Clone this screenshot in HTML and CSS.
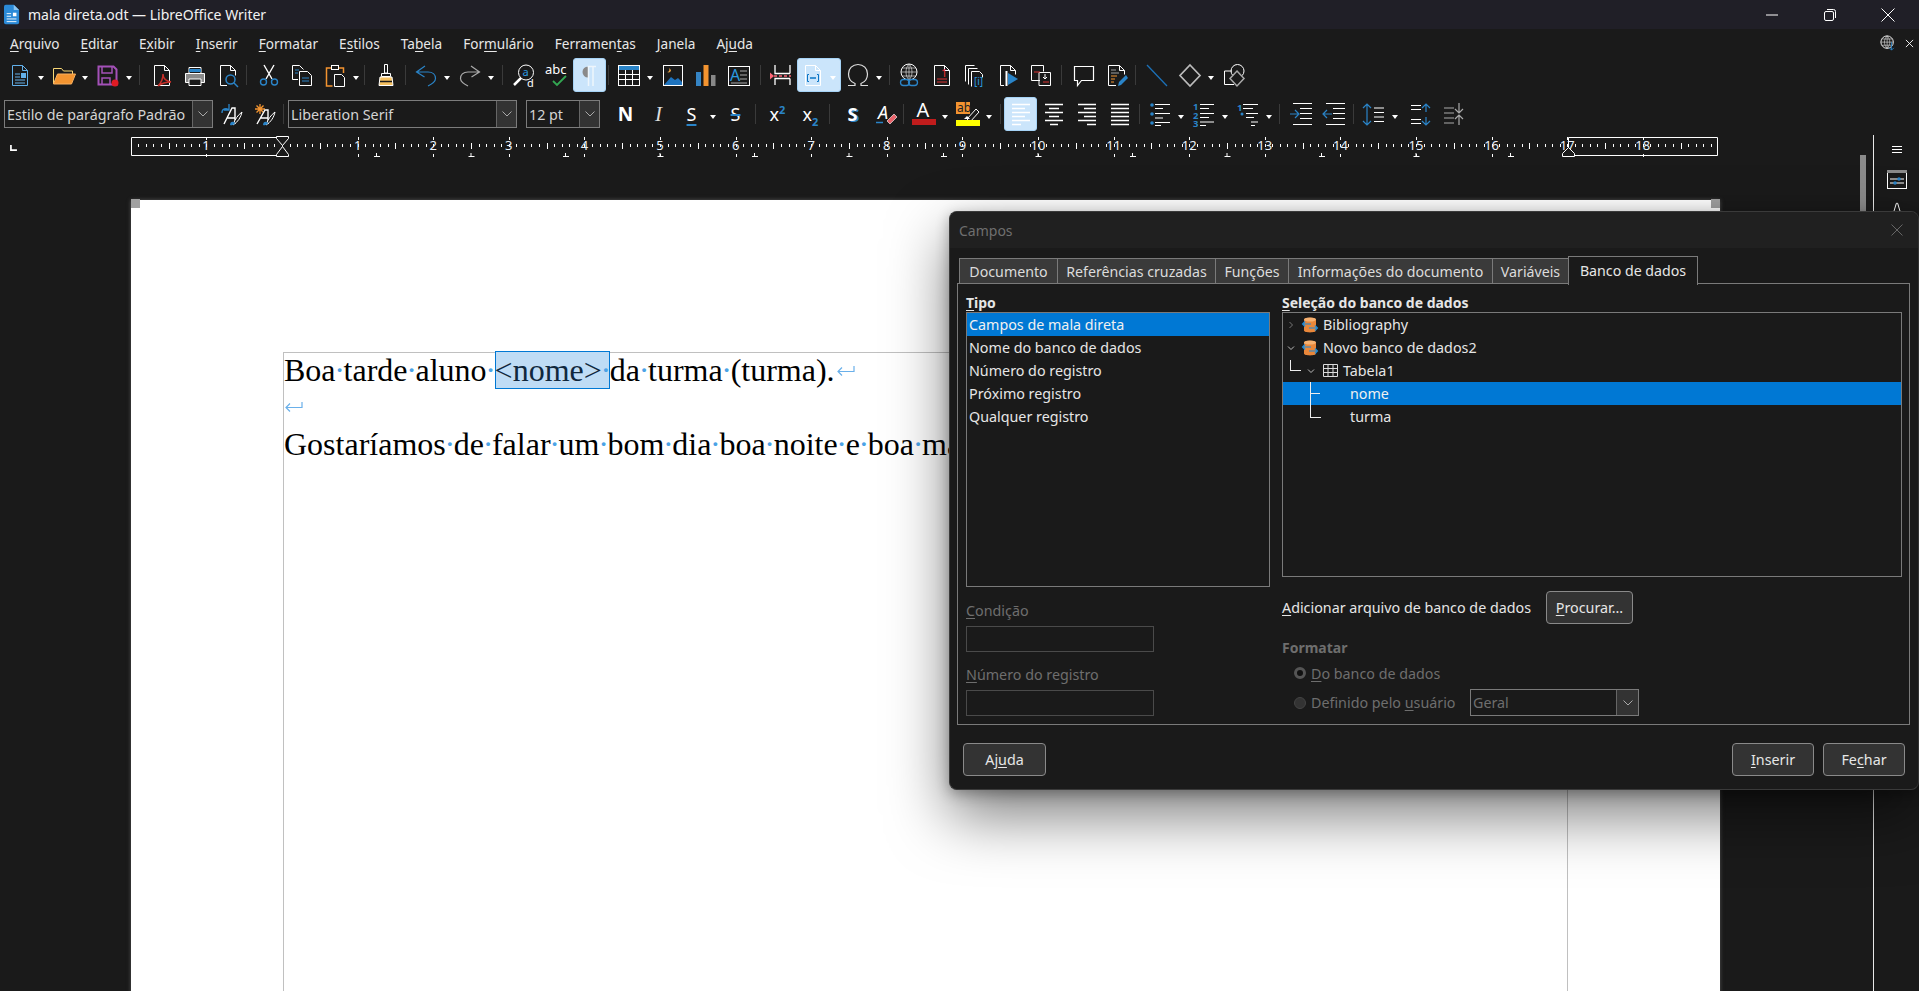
FILE: index.html
```html
<!DOCTYPE html>
<html lang="pt-BR">
<head>
<meta charset="utf-8">
<title>mala direta.odt — LibreOffice Writer</title>
<link rel="stylesheet" href="styles.css">
</head>
<body>
<div class="app">
  <header class="titlebar">
    <svg class="appicon" viewBox="0 0 18 22"><path d="M2 0h9l6 6v14a2 2 0 0 1-2 2H2a2 2 0 0 1-2-2V2a2 2 0 0 1 2-2z" fill="#2b8ad8"/><path d="M11 0l6 6h-6z" fill="#8cc4f0"/><path d="M3 10h5M3 13h5M3 16h11M3 19h11" stroke="#fff" fill="none"/><rect x="10" y="9" width="4" height="4" fill="#fff"/></svg>
    <span class="wintitle">mala direta.odt — LibreOffice Writer</span>
    <div class="winctl">
      <svg viewBox="0 0 14 14"><path d="M1 7h12" class="w"/></svg>
      <svg viewBox="0 0 14 14"><path d="M4 1.500h6.500a2 2 0 0 1 2 2V10M3 3.500h6a1.500 1.500 0 0 1 1.500 1.500v6A1.500 1.500 0 0 1 9 12.500H3A1.500 1.500 0 0 1 1.500 11V5A1.500 1.500 0 0 1 3 3.500z" class="w"/></svg>
      <svg viewBox="0 0 14 14"><path d="M.5.500l13 13M13.500.500l-13 13" class="w"/></svg>
    </div>
  </header>

  <nav class="menubar">
    <span><u>A</u>rquivo</span><span><u>E</u>ditar</span><span>E<u>x</u>ibir</span><span><u>I</u>nserir</span><span><u>F</u>ormatar</span><span>E<u>s</u>tilos</span><span>Ta<u>b</u>ela</span><span>For<u>m</u>ulário</span><span>Ferramen<u>t</u>as</span><span><u>J</u>anela</span><span>Aj<u>u</u>da</span>
    <div class="menu-end">
      <svg viewBox="0 0 18 18"><circle cx="8" cy="8" r="7" class="w"/><path d="M1 8h14M2 4.500h12M2 11.500h12M8 1v14M8 1c-4 4-4 10 0 14M8 1c4 4 4 10 0 14" class="w thin"/><path d="M13 8v9M10.500 14.500L13 17l2.500-2.500" class="b"/></svg>
      <svg class="mclose" viewBox="0 0 10 10"><path d="M1 1l8 8M9 1l-8 8" class="w"/></svg>
    </div>
  </nav>

  <div class="toolbar tb1">
    <div class="t"><svg viewBox="0 0 24 24"><path d="M4.500 2.500h10l5 5v15h-15z" class="lb"/><path d="M14.500 2.500v5h5M7 11h5M7 14h5M7 17h10M7 20h10" class="lb"/><rect x="13" y="10" width="5" height="5" fill="#62b0ea"/></svg></div><i class="arr"></i>
    <div class="t"><svg viewBox="0 0 24 24"><path d="M1.500 21V5.500h8l2 2.500h9v3" fill="none" stroke="#f8d775"/><path d="M1.500 21l4-10h18l-4 10z" fill="#f39430" stroke="#f8b060"/></svg></div><i class="arr"></i>
    <div class="t"><svg viewBox="0 0 24 24"><path d="M2.500 3.500h15l3 3v15h-18z" fill="none" stroke="#a451b8" stroke-width="2"/><path d="M6 4v6h10V4M6 22v-7h8v7" fill="none" stroke="#a451b8" stroke-width="1.500"/><circle cx="19" cy="20" r="3.500" fill="#e01b24"/></svg></div><i class="arr"></i>
    <i class="sep l4 r5"></i>
    <div class="t"><svg viewBox="0 0 24 24"><path d="M4.500 2.500h10l5 5v15h-15z" class="w"/><path d="M14.500 2.500v5h5" class="w"/><path d="M8 23c3-3 5-7 5-12 0 4 3 7 8 8-5 0-9 1-13 4z" fill="#1a1a1a" stroke="#c8302a" stroke-width="1.500"/></svg></div>
    <div class="t"><svg viewBox="0 0 24 24"><path d="M6 10V4.500h12V10" class="w"/><rect x="6" y="6" width="12" height="3" fill="#2a84c8"/><path d="M2.500 10.500h19v9h-19z" fill="#8a8a8a" stroke="#fff"/><path d="M6 16h12v6.500H6z" fill="#1a1a1a" stroke="#fff"/></svg></div>
    <div class="t"><svg viewBox="0 0 24 24"><path d="M11 22.500H4.500v-20h10l5 5v5M14.500 2.500v5h5" class="w"/><circle cx="14.500" cy="16.500" r="4.500" class="b" stroke-width="1.500"/><path d="M18 20l4 4" class="b" stroke-width="1.500"/></svg></div>
    <i class="sep l2 r5"></i>
    <div class="t"><svg viewBox="0 0 24 24"><path d="M7 2l8 14M17 2L9 16" class="w" stroke-width="1.400"/><circle cx="6.500" cy="19" r="3" class="b" stroke-width="1.400"/><circle cx="17.500" cy="19" r="3" class="b" stroke-width="1.400"/></svg></div>
    <div class="t"><svg viewBox="0 0 24 24"><path d="M8 16.500H2.500v-14h7l4 4" class="w"/><path d="M5 7h4M5 10h3" class="b"/><path d="M9.500 8.500h8l4 4v10h-12z" class="w"/><path d="M12 15h7M12 18h7" class="b"/></svg></div>
    <div class="t"><svg viewBox="0 0 24 24"><path d="M8 5H3.500v18h6M16 5h4.500v5" fill="none" stroke="#f39430" stroke-width="1.500"/><rect x="8.500" y="2.500" width="7" height="4" class="w"/><path d="M11.500 11.500h7l3 3v9h-10z" class="w"/></svg></div><i class="arr"></i>
    <i class="sep l2 r4"></i>
    <div class="t"><svg viewBox="0 0 24 24"><path d="M10.500 1.500h3V10h-3zM7.500 10.500h9v3h-9z" class="w"/><path d="M6 14h12l1 8.500H5z" fill="#f5c060" stroke="#fff"/><path d="M6 18.500h12" stroke="#1a1a1a" stroke-width="1.500"/></svg></div>
    <i class="sep l3 r3"></i>
    <div class="t"><svg viewBox="0 0 24 24"><path d="M11 3L2.500 9l8 5M2.500 9H14c5 0 7.500 3 7.500 6.500S18 21 14 23" class="b" stroke-width="1.200"/></svg></div><i class="arr"></i>
    <div class="t"><svg viewBox="0 0 24 24"><path d="M13 3l8.500 6-8 5M21.500 9H10C5 9 2.500 12 2.500 15.500S6 21 10 23" class="g" stroke-width="1.200"/></svg></div><i class="arr"></i>
    <i class="sep l5 r4"></i>
    <div class="t"><svg viewBox="0 0 24 24"><circle cx="14" cy="9.500" r="7.500" class="w"/><path d="M9 15l-7 7" class="w" stroke-width="2.500"/><text x="10.500" y="13" class="tic bt">a</text><text x="15" y="23.500" class="tic">d</text></svg></div>
    <div class="t"><svg viewBox="0 0 24 24"><text x="0" y="11" class="tabc">abc</text><path d="M8 18l4 4 9-9" fill="none" stroke="#33a852" stroke-width="1.800"/></svg></div>
    <div class="t on"><svg viewBox="0 0 24 24"><path d="M10 3.500a5.500 5.500 0 0 0 0 11z" fill="#8a8a8a"/><path d="M9.500 3.500H18M10.500 3.500V23M15 3.500V23" fill="none" stroke="#eef6fc" stroke-width="1.500"/></svg></div>
    <i class="sep l2 r3"></i>
    <div class="t"><svg viewBox="0 0 24 24"><rect x="1.500" y="2.500" width="21" height="20" class="w"/><rect x="2" y="3" width="20" height="4" fill="#2a84c8"/><path d="M2 11.500h20M2 16.500h20M8.500 7v15M15.500 7v15" class="w"/></svg></div><i class="arr"></i>
    <div class="t"><svg viewBox="0 0 24 24"><rect x="2.500" y="2.500" width="19" height="20" class="w"/><path d="M3 22l7-8 4 3 3-2 4 4v3z" fill="#1e73be"/><path d="M8 5c1 2 0 4-2 4 2 1 4 0 4-2z" fill="#e9a040"/></svg></div>
    <div class="t"><svg viewBox="0 0 24 24"><rect x="2" y="9" width="5" height="14" fill="#3584c4"/><rect x="9.500" y="2" width="5" height="21" fill="#f39430"/><rect x="17" y="12" width="4.500" height="11" fill="#888"/></svg></div>
    <div class="t"><svg viewBox="0 0 24 24"><rect x="1.500" y="3.500" width="21" height="19" class="w"/><text x="3" y="18" class="tA bt">A</text><path d="M13 8h7M13 12h7M13 16h7M4 20h16" class="g"/></svg></div>
    <i class="sep l5 r3"></i>
    <div class="t"><svg viewBox="0 0 24 24"><path d="M6 2v8.500h15M21 2v8.500M6 22v-6.500h15M21 22v-6.500" class="w" stroke-width="1.300"/><path d="M5 13h17" stroke="#f67" stroke-width="1.500" stroke-dasharray="3 2" fill="none"/><path d="M1 9.500l4 3.500-4 3.500z" fill="#f67"/></svg></div>
    <div class="t wide on"><svg viewBox="0 0 24 24"><path d="M4.500 2.500h10l5 5v15h-15z" class="w"/><path d="M14.500 2.500v5h5" class="w"/><path d="M8 11.500H6.500v7H8M16 11.500h1.500v7H16" fill="none" stroke="#0a74c4"/><path d="M9 15h6" stroke="#0a74c4" stroke-width="1.500"/></svg><i class="arr"></i></div>
    <div class="t"><svg viewBox="0 0 24 24"><path d="M2 22.500h7v-2c-4-1.500-6.500-5-6.500-9.500C2.500 5.500 6.500 1.500 12 1.500s9.500 4 9.500 9.500c0 4.500-2.500 8-6.500 9.500v2h7" fill="none" stroke="#ddd" stroke-width="1.200"/></svg></div><i class="arr"></i>
    <i class="sep l4 r2"></i>
    <div class="t"><svg viewBox="0 0 24 24"><circle cx="12" cy="9" r="8" class="w"/><path d="M4 9h16M5 5h14M5 13h14M12 1v16M12 1c-4 4-4 12 0 16M12 1c4 4 4 12 0 16" class="w thin"/><rect x="3.500" y="16.500" width="9" height="6" rx="3" class="b" stroke-width="1.300"/><rect x="11.500" y="16.500" width="9" height="6" rx="3" class="b" stroke-width="1.300"/></svg></div>
    <div class="t"><svg viewBox="0 0 24 24"><path d="M4.500 2.500h10l5 5v15h-15z" class="w"/><path d="M14.500 2.500v5h5" class="w"/><text x="11" y="14" class="tic rt">1</text><path d="M7 16h10M7 19h10" stroke="#d33" fill="none"/></svg></div>
    <div class="t"><svg viewBox="0 0 24 24"><path d="M2.500 18.500v-16h9M5.500 21.500v-16h9M8.500 2.500" class="w"/><path d="M8.500 23.500v-15h8l3 3v3" class="w"/><text x="11" y="22" class="tic sm bt">[i]</text></svg></div>
    <div class="t"><svg viewBox="0 0 24 24"><path d="M8 22.500H4.500v-20h10l5 5v4M14.500 2.500v5h5" class="w"/><path d="M10.500 8v15" class="w" stroke-width="2"/><path d="M12 10l10 6-10 6z" fill="#2a84c8"/></svg></div>
    <div class="t"><svg viewBox="0 0 24 24"><path d="M11 17.500H2.500v-15h12v6" class="w"/><path d="M10 9.500h11.500v13H10z" class="w"/><path d="M5 9h6" stroke="#d33"/><path d="M14 19h6" stroke="#d33"/><path d="M16 11v5M14 14l2 2 2-2" class="w"/></svg></div>
    <i class="sep l4 r5"></i>
    <div class="t"><svg viewBox="0 0 24 24"><path d="M2.500 3.500h19v14H9.500l-4 5v-5h-3z" class="w" stroke-width="1.200"/></svg></div>
    <div class="t"><svg viewBox="0 0 24 24"><path d="M11 22.500H3.500v-20h11l5 5v4M14.500 2.500v5h5" class="w"/><path d="M6 7h5M6 10h8" class="w thin"/><path d="M6 13h6M6 16h4M6 19h3" fill="none" stroke="#f39430"/><path d="M13 23l1-4 7-7 2 3-7 7z" fill="#2a84c8"/></svg></div>
    <i class="sep l2 r4"></i>
    <div class="t"><svg viewBox="0 0 24 24"><path d="M2 2l20 21" stroke="#1c71b8" stroke-width="1.300" fill="none"/></svg></div>
    <div class="t"><svg viewBox="0 0 24 24"><path d="M12 2l10 10.500L12 23 2 12.500z" fill="none" stroke="#bbb" stroke-width="1.700"/></svg></div><i class="arr"></i>
    <div class="t"><svg viewBox="0 0 24 24"><path d="M10 8H2.500v13.500H12" class="w"/><circle cx="15.500" cy="8" r="6.500" class="w"/><path d="M15 8l7 7.500-7 7.500-7-7.500z" fill="#1a1a1a" stroke="#aaa" stroke-width="1.500"/></svg></div>
  </div>

  <div class="toolbar tb2">
    <div class="combo c-style"><span>Estilo de parágrafo Padrão</span><b><svg viewBox="0 0 10 6"><path d="M.5.500L5 5 9.500.500"/></svg></b></div>
    <div class="t ml2"><svg viewBox="0 0 24 24"><path d="M2 11a4 4 0 0 1 7-3M9 2v6H4" class="b" stroke-width="1.300"/><path d="M4 22l8-16h3v16M7.500 16h8" class="w" stroke-width="1.400"/><path d="M13 23c2-6 5-10 9-13-1 5-4 10-9 13z" fill="#1a1a1a" stroke="#fff"/><path d="M10 23c0-3 2-4 4-3s0 4-4 3z" fill="#2a84c8"/></svg></div>
    <div class="t"><svg viewBox="0 0 24 24"><path d="M2 7h10M7 2v10M3.500 3.500l7 7M10.500 3.500l-7 7" fill="none" stroke="#f39430" stroke-width="1.300"/><path d="M4 22l8-14h3v14M7.500 16h8" class="w" stroke-width="1.400"/><path d="M13 23c2-6 5-10 9-13-1 5-4 10-9 13z" fill="#1a1a1a" stroke="#fff"/><path d="M10 23c0-3 2-4 4-3s0 4-4 3z" fill="#2a84c8"/></svg></div>
    <i class="sep l2 r4"></i>
    <div class="combo c-font"><span>Liberation Serif</span><b><svg viewBox="0 0 10 6"><path d="M.5.500L5 5 9.500.500"/></svg></b></div>
    <div class="combo c-size"><span>12 pt</span><b><svg viewBox="0 0 10 6"><path d="M.5.500L5 5 9.500.500"/></svg></b></div>
    <div class="t ml9"><span class="fmt fb">N</span></div>
    <div class="t"><span class="fmt fi">I</span></div>
    <div class="t"><span class="fmt fu">S</span></div><i class="arr"></i>
    <div class="t"><span class="fmt fs">S</span></div>
    <i class="sep l3 r5"></i>
    <div class="t"><span class="fmt">x<sup>2</sup></span></div>
    <div class="t"><span class="fmt">x<sub>2</sub></span></div>
    <i class="sep l2 r6"></i>
    <div class="t"><span class="fmt fsh">S</span></div>
    <div class="t"><svg viewBox="0 0 24 24"><text x="4" y="17" class="tA2">A</text><path d="M2 20.500h7" class="b" stroke-width="1.500"/><path d="M13 19l7-7 3 3-7 7z" fill="#e8636a" stroke="#fff" stroke-width=".6"/></svg></div>
    <i class="sep l1 r3"></i>
    <div class="t"><svg viewBox="0 0 24 24"><text x="4.500" y="15" class="tA3">A</text><rect x="0" y="17" width="24" height="6" fill="#c01c1c"/></svg></div><i class="arr"></i>
    <div class="t"><svg viewBox="0 0 24 24"><rect x="0" y="0" width="14" height="12" fill="#f39430"/><text x="1" y="10" class="tic tk">ab</text><path d="M11 17l9-10 3 3-9 10z" fill="#1a1a1a" stroke="#fff"/><path d="M8 17l3-3 3 3z" fill="#fff"/><rect x="0" y="18" width="24" height="6" fill="#ff0"/></svg></div><i class="arr"></i>
    <i class="sep l5 r3"></i>
    <div class="t on"><svg viewBox="0 0 24 24"><path d="M3 2.500h18M3 6.500h13M3 10.500h18M3 14.500h13M3 18.500h18M3 22.500h9" class="w" stroke-width="1.300"/></svg></div>
    <div class="t"><svg viewBox="0 0 24 24"><path d="M3 2.500h18M7 6.500h10M3 10.500h18M7 14.500h10M3 18.500h18M8 22.500h8" class="w" stroke-width="1.300"/></svg></div>
    <div class="t"><svg viewBox="0 0 24 24"><path d="M3 2.500h18M9 6.500h12M3 10.500h18M9 14.500h12M3 18.500h18M12 22.500h9" class="w" stroke-width="1.300"/></svg></div>
    <div class="t"><svg viewBox="0 0 24 24"><path d="M3 2.500h18M3 6.500h18M3 10.500h18M3 14.500h18M3 18.500h18M3 22.500h18" class="w" stroke-width="1.300"/></svg></div>
    <i class="sep l3 r3"></i>
    <div class="t"><svg viewBox="0 0 24 24"><circle cx="4" cy="3" r="1.800" fill="#2a84c8"/><circle cx="4" cy="12" r="1.800" fill="#2a84c8"/><circle cx="4" cy="21" r="1.800" fill="#2a84c8"/><path d="M7 2.500h15M7 6.500h8M7 11.500h15M7 16h8M7 20.500h15M7 23.500h6" class="w" stroke-width="1.200"/></svg></div><i class="arr"></i>
    <div class="t"><svg viewBox="0 0 24 24"><text x="1" y="8" class="tn">1</text><text x="1" y="17" class="tn">2</text><text x="1" y="25" class="tn">3</text><path d="M8 2.500h14M8 6.500h9M8 11.500h14M8 15.500h9M8 20h14M8 23.500h6" class="w" stroke-width="1.200"/></svg></div><i class="arr"></i>
    <div class="t"><svg viewBox="0 0 24 24"><text x="1" y="9" class="tn">1</text><circle cx="6" cy="12" r="1.500" fill="#2a84c8"/><path d="M7 2.500h15M7 6.500h10M10 11.500h12M10 15.500h8M15 20h7M15 23.500h4" class="w" stroke-width="1.200"/></svg></div><i class="arr"></i>
    <i class="sep l4 r4"></i>
    <div class="t"><svg viewBox="0 0 24 24"><path d="M4 1.500h19M11 6.500h12M11 11.500h12M11 16.500h12M4 22.500h19" class="w" stroke-width="1.200"/><path d="M1 12h8M6 8l4 4-4 4" class="b" stroke-width="1.200"/></svg></div>
    <div class="t"><svg viewBox="0 0 24 24"><path d="M4 1.500h19M11 6.500h12M11 11.500h12M11 16.500h12M4 22.500h19" class="w" stroke-width="1.200"/><path d="M10 12H2M5 8l-4 4 4 4" class="b" stroke-width="1.200"/></svg></div>
    <i class="sep l3 r3"></i>
    <div class="t"><svg viewBox="0 0 24 24"><path d="M5 2v21M1 6l4-4 4 4M1 19l4 4 4-4" class="b" stroke-width="1.200"/><path d="M12 6h10M12 10.500h10M12 15h10M12 19.500h10" class="w" stroke-width="1.200"/></svg></div><i class="arr"></i>
    <div class="t ml3"><svg viewBox="0 0 24 24"><path d="M2 3.500h10M2 7.500h10M2 17.500h10M2 21.500h10" class="w" stroke-width="1.200"/><path d="M17 10V2M13 6l4-4 4 4M17 15v8M13 19l4 4 4-4" class="b" stroke-width="1.200"/></svg></div>
    <div class="t"><svg viewBox="0 0 24 24"><path d="M2 6h10M2 11h10M2 16h10M2 21h10" class="g" stroke-width="1.200"/><path d="M17 1v10M13 7l4 4 4-4M17 23V13M13 17l4-4 4 4" class="g" stroke-width="1.200"/></svg></div>
  </div>

  <main class="workspace">
    <div class="docside">
      <div class="rulerrow">
        <svg class="tabtype" viewBox="0 0 8 7"><path d="M0 0h2v5h6v2H0z" fill="#fff"/></svg>
        <svg class="ruler" viewBox="0 0 1600 23">
          <path d="M.5 2.500H151M.5 20.500H151M.5 2.500v18M1437.500 2.500H1586.500v18H1437.500z" class="w"/>
          <line x1="7.360" y1="10.500" x2="1586" y2="10.500" stroke-dasharray="1 6.560" class="tick"/>
          <line x1="37.600" y1="10.500" x2="1586" y2="10.500" stroke-dasharray="1 74.600" class="tick long"/>
          <line x1="75.400" y1="3" x2="1586" y2="3" stroke-dasharray="1 74.600" class="tick"/>
          <line x1="75.400" y1="20" x2="1586" y2="20" stroke-dasharray="1 74.600" class="tick"/>
          <path d="M245.500 18v3M243 21.500h6M340 18v3M337.500 21.500h6M434.500 18v3M432 21.500h6M529 18v3M526.500 21.500h6M623.500 18v3M621 21.500h6M718 18v3M715.500 21.500h6M812.500 18v3M810 21.500h6M907 18v3M904.500 21.500h6M1001.500 18v3M999 21.500h6M1096 18v3M1093.500 21.500h6M1190.500 18v3M1188 21.500h6M1285 18v3M1282.500 21.500h6M1379.500 18v3M1377 21.500h6" class="w"/>
          <g class="rnum">
            <text x="75">1</text><text x="226.600">1</text><text x="302.200">2</text><text x="377.800">3</text><text x="453.400">4</text><text x="529">5</text><text x="604.600">6</text><text x="680.200">7</text><text x="755.800">8</text><text x="831.400">9</text><text x="907">10</text><text x="982.600">11</text><text x="1058.200">12</text><text x="1133.800">13</text><text x="1209.400">14</text><text x="1285">15</text><text x="1360.600">16</text><text x="1436.200">17</text><text x="1511.800">18</text>
          </g>
          <path d="M145.500 1.500h12v2l-6 7-6-7zM145.500 21.500h12v-2l-6-8-6 8z" fill="#1a1a1a" stroke="#fff"/>
          <path d="M1431.500 21.500h12v-3l-6-6-6 6z" fill="#1a1a1a" stroke="#fff"/>
        </svg>
      </div>
      <div class="docview">
        <div class="page">
          <i class="crop crop-l"></i><i class="crop crop-r"></i>
          <div class="textarea">
            <p>Boa<b>·</b>tarde<b>·</b>aluno<b>·</b><span class="field">&lt;nome&gt;<b>·</b></span>da<b>·</b>turma<b>·</b>(turma).<svg class="pil" viewBox="0 0 18 11"><path d="M17 0v5.500H1M5 1.500L1 5.500l4 4"/></svg></p>
            <p><svg class="pil first" viewBox="0 0 18 11"><path d="M17 0v5.500H1M5 1.500L1 5.500l4 4"/></svg></p>
            <p>Gostaríamos<b>·</b>de<b>·</b>falar<b>·</b>um<b>·</b>bom<b>·</b>dia<b>·</b>boa<b>·</b>noite<b>·</b>e<b>·</b>boa<b>·</b>manhã.</p>
          </div>
        </div>
      </div>
    </div>
    <div class="vscroll"><i class="thumb"></i></div>
    <aside class="sidebar">
      <svg class="sb-menu" viewBox="0 0 10 7"><path d="M0 .5h10M0 3.500h10M0 6.500h10" class="w"/></svg>
      <svg class="sb-prop" viewBox="0 0 20 19"><rect x=".5" y=".5" width="19" height="18" class="w"/><rect x="0" y="0" width="20" height="3" fill="#8a8a8a"/><path d="M3 9h14M3 13h14" class="w"/><circle cx="12" cy="9" r="1.800" fill="#2a84c8"/><circle cx="8" cy="13" r="1.800" fill="#2a84c8"/></svg>
      <svg class="sb-a" viewBox="0 0 20 24"><path d="M3 22L9 2h2l6 20" class="w" stroke-width="1.500"/></svg>
    </aside>
  </main>

  <section class="dlg">
    <div class="dlg-title"><span>Campos</span><svg viewBox="0 0 12 12"><path d="M.5.500l11 11M11.500.500l-11 11"/></svg></div>
    <div class="dlg-body">
      <div class="tabs">
        <span class="tab w-doc">Documento</span><span class="tab w-ref">Referências cruzadas</span><span class="tab w-fun">Funções</span><span class="tab w-inf">Informações do documento</span><span class="tab w-var">Variáveis</span><span class="tab active w-ban">Banco de dados</span>
      </div>
      <div class="panel">
        <div class="col-l">
          <div class="lbl strong"><u>T</u>ipo</div>
          <ul class="list">
            <li class="sel">Campos de mala direta</li>
            <li>Nome do banco de dados</li>
            <li>Número do registro</li>
            <li>Próximo registro</li>
            <li>Qualquer registro</li>
          </ul>
          <div class="lbl dim m15"><u>C</u>ondição</div>
          <div class="input"></div>
          <div class="lbl dim m14"><u>N</u>úmero do registro</div>
          <div class="input"></div>
        </div>
        <div class="col-r">
          <div class="lbl strong"><u>S</u>eleção do banco de dados</div>
          <div class="tree">
            <div class="row"><svg class="chev" viewBox="0 0 10 10"><path d="M3.500 2l3 3-3 3" stroke="#777"/></svg><svg class="db" viewBox="0 0 16 18"><path d="M2 3.500C2 1 14 1 14 3.500v11C14 17 2 17 2 14.500z" fill="#e9873a"/><ellipse cx="8" cy="3.500" rx="6" ry="2" fill="#f5b070"/><path d="M0 8h9M3 5.500L.5 8 3 10.500M16 12H7M13 9.500l2.500 2.500-2.500 2.500" fill="none" stroke="#1c8ad8" stroke-width="1.200"/></svg><span class="rt1">Bibliography</span></div>
            <div class="row"><svg class="chev" viewBox="0 0 10 10"><path d="M2 3.500l3 3 3-3" stroke="#bbb"/></svg><svg class="db" viewBox="0 0 16 18"><path d="M2 3.500C2 1 14 1 14 3.500v11C14 17 2 17 2 14.500z" fill="#e9873a"/><ellipse cx="8" cy="3.500" rx="6" ry="2" fill="#f5b070"/><path d="M0 8h9M3 5.500L.5 8 3 10.500M16 12H7M13 9.500l2.500 2.500-2.500 2.500" fill="none" stroke="#1c8ad8" stroke-width="1.200"/></svg><span class="rt1">Novo banco de dados2</span></div>
            <div class="row lvl1 l-last"><svg class="chev" viewBox="0 0 10 10"><path d="M2 3.500l3 3 3-3" stroke="#bbb"/></svg><svg class="tbl" viewBox="0 0 15 13"><path d="M.5.500h14v12H.5zM.5 4.500h14M.5 8.500h14M5 .5v12M10 .5v12" fill="none" stroke="#ddd"/></svg><span class="rt1">Tabela1</span></div>
            <div class="row lvl2 sel l-mid">nome</div>
            <div class="row lvl2 l-end">turma</div>
          </div>
          <div class="addrow"><span class="addlbl"><u>A</u>dicionar arquivo de banco de dados</span><span class="btn b-proc"><span><u>P</u>rocurar...</span></span></div>
          <div class="lbl strong dim m15">Formatar</div>
          <div class="radio r-1"><i class="rd on"></i><span><u>D</u>o banco de dados</span></div>
          <div class="radio r-2"><i class="rd"></i><span class="rdw">Definido pelo <u>u</u>suário</span><div class="combo c-geral"><span>Geral</span><b><svg viewBox="0 0 10 6"><path d="M.5.500L5 5 9.500.500"/></svg></b></div></div>
        </div>
      </div>
      <div class="actions">
        <span class="btn">Aj<u>u</u>da</span>
        <span class="spacer"></span>
        <span class="btn b-act"><u>I</u>nserir</span>
        <span class="btn b-act">Fe<u>c</u>har</span>
      </div>
    </div>
  </section>
</div>
</body>
</html>
```

FILE: styles.css
```css
* { box-sizing: border-box; }
html, body { margin: 0; padding: 0; height: 100%; overflow: hidden; background: #1a1a1a; }
body { font-family: "Noto Sans", "Open Sans", sans-serif; font-size: 13.6px; color: #e6e6e6; }
i { font-style: normal; display: block; }
u { text-underline-offset: 2px; text-decoration-thickness: 1px; }
svg { display: block; overflow: visible; }

.w { fill: none; stroke: #fff; }
.w.thin { stroke: #ddd; stroke-width: .7; }
.b { fill: none; stroke: #2a84c8; }
.lb { fill: none; stroke: #62b0ea; }
.g { fill: none; stroke: #aaa; }

.app { position: relative; width: 1919px; height: 991px; overflow: hidden; display: flex; flex-direction: column; }

/* title bar */
.titlebar { height: 29px; background: #201f27; display: flex; align-items: center; padding-left: 4px; flex: none; }
.appicon { width: 16px; height: 21px; }
.wintitle { margin-left: 8px; font-size: 14px; color: #f2f2f2; }
.winctl { margin-left: auto; display: flex; align-items: center; padding-right: 24px; gap: 44px; }
.winctl svg { width: 14px; height: 14px; }

/* menu */
.menubar { height: 28px; flex: none; display: flex; align-items: center; padding-left: 10px; gap: 21px; font-size: 13.6px; color: #e8e8e8; }
.menu-end { margin-left: auto; display: flex; align-items: center; gap: 9px; padding-right: 5px; }
.menu-end svg { width: 16px; height: 16px; }
.menu-end .mclose { width: 9px; height: 9px; }

/* toolbars */
.toolbar { display: flex; align-items: center; flex: none; }
.tb1 { height: 34px; margin-top: 1px; padding-left: 3px; }
.tb2 { height: 34px; margin-top: 5px; padding-left: 4px; }
.t { width: 33px; height: 34px; flex: none; display: flex; align-items: center; justify-content: center; }
.t svg { width: 24px; height: 24px; }
.t.on { background: #cbe5fb; border: 1px solid #a6d3f6; border-radius: 3px; }
.t.wide { width: 44px; justify-content: flex-start; padding-left: 3px; }
.t.wide .arr { margin-left: 3px; }
.arr { width: 11px; height: 34px; flex: none; position: relative; }
.arr::after { content: ""; position: absolute; left: 2px; top: 18px; border: 3.5px solid transparent; border-top: 4.5px solid #fff; border-bottom: 0; }
.sep { width: 1px; height: 20px; background: #3a3a3a; flex: none; }
.l1 { margin-left: 1px; } .l2 { margin-left: 2px; } .l3 { margin-left: 3px; } .l4 { margin-left: 4px; } .l5 { margin-left: 5px; }
.r2 { margin-right: 2px; } .r3 { margin-right: 3px; } .r4 { margin-right: 4px; } .r5 { margin-right: 5px; } .r6 { margin-right: 6px; }
.ml2 { margin-left: 2px; } .ml3 { margin-left: 3px; } .ml9 { margin-left: 9px; }

.tic { font: 11px "Noto Sans", sans-serif; fill: #fff; }
.tic.sm { font-size: 10px; }
.tic.bt { fill: #2a9ae0; }
.tic.rt { fill: #e33; }
.tic.tk { fill: #222; font-size: 12px; }
.tabc { font: 13px "Noto Sans", sans-serif; fill: #fff; }
.tA { font: 16px "Noto Sans", sans-serif; }
.tA.bt { fill: #2a9ae0; }
.tA2 { font: italic 18px "Noto Sans", sans-serif; fill: #fff; }
.tA3 { font: 20px "Noto Sans", sans-serif; fill: #fff; }
.tn { font: 700 9.5px "Noto Sans", sans-serif; fill: #2a84c8; }

.fmt { font-size: 18px; line-height: 1; color: #fff; }
.fb { font-weight: 700; font-size: 19px; }
.fi { font-family: "Liberation Serif", serif; font-style: italic; font-size: 21px; color: #ddd; }
.fu { text-decoration: underline; text-decoration-color: #2a84c8; text-underline-offset: 3px; text-decoration-thickness: 1.5px; }
.fs { text-decoration: line-through; text-decoration-color: #2a84c8; text-decoration-thickness: 1.5px; }
.fsh { font-weight: 700; text-shadow: 2px 1px 0 #2a84c8; }
.fmt sup, .fmt sub { font-size: 11px; color: #2a84c8; font-weight: 700; line-height: 0; }

/* combos */
.combo { height: 28px; flex: none; display: flex; border: 1px solid #7c7c7c; background: #1a1a1a; color: #d4d4d4; align-items: stretch; }
.combo span { flex: 1; padding-left: 2px; display: flex; align-items: center; white-space: nowrap; overflow: hidden; font-size: 14.3px; }
.combo b { width: 20px; flex: none; background: #333; border-left: 1px solid #666; display: flex; align-items: center; justify-content: center; }
.combo b svg { width: 10px; height: 6px; fill: none; stroke: #aaa; }
.c-style { width: 209px; }
.c-font { width: 229px; }
.c-size { width: 74px; margin-left: 9px; }

/* workspace */
.workspace { flex: 1; margin-top: 4px; display: flex; min-height: 0; }
.docside { flex: 1; min-width: 0; display: flex; flex-direction: column; }
.rulerrow { height: 23px; flex: none; position: relative; padding-left: 131px; }
.tabtype { position: absolute; left: 10px; top: 10px; width: 7px; height: 6px; }
.ruler { width: 1600px; height: 23px; }
.tick { stroke: #fff; stroke-width: 3; shape-rendering: crispEdges; }
.tick.long { stroke-width: 6; }
.rnum text { font: 13px "Noto Sans", sans-serif; fill: #eaf2fa; text-anchor: middle; transform: translateY(15px); }
.docview { flex: 1; min-height: 0; padding: 42px 0 0 131px; overflow: hidden; }
.page { position: relative; width: 1589px; height: 900px; background: #fff; box-shadow: 0 0 4px #555; padding: 152px 0 0 152px; }
.crop { position: absolute; top: -1px; width: 9px; height: 9px; background: #a0a0a0; }
.crop-l { left: 0; }
.crop-r { right: 0; }
.textarea { width: 1285px; height: 800px; border: 1px solid #c0c0c0; border-bottom: 0; font: 32px/36.8px "Liberation Serif", serif; color: #000; white-space: nowrap; }
.textarea p { margin: 0; height: 36.8px; position: relative; top: -1px; }
.textarea b { font-weight: 400; color: #4ba3e6; letter-spacing: -1.33px; margin-left: -1.33px; }
.field { background: #bfdcf5; box-shadow: inset 0 0 0 1px #0078d4; color: #10283e; padding: 1px 0; }
.pil { display: inline-block; width: 18px; height: 11px; margin-left: 2px; fill: none; stroke: #6ab0ea; stroke-width: 1.2; vertical-align: 4px; }
.pil.first { margin-left: 1px; vertical-align: baseline; position: relative; top: -5px; }

.vscroll { width: 23px; flex: none; padding: 20px 0 0 10px; }
.thumb { width: 6px; height: 300px; background: #8a8a8a; }
.sidebar { width: 46px; flex: none; border-left: 1px solid #e8e8e8; display: flex; flex-direction: column; align-items: center; padding-top: 11px; }
.sb-menu { width: 10px; height: 7px; }
.sb-prop { width: 20px; height: 19px; margin-top: 17px; }
.sb-a { width: 14px; height: 16px; margin-top: 13px; }

/* dialog */
.dlg { position: absolute; left: 949px; top: 211px; width: 970px; height: 579px; border: 1px solid #3a3a3a; border-right-color: #333; border-radius: 8px; overflow: hidden; background: #1a1a1a; font-size: 14.3px; box-shadow: 0 26px 60px rgba(0, 0, 0, .5), 0 4px 14px rgba(0, 0, 0, .3); }
.dlg-title { height: 36px; background: #202020; display: flex; align-items: center; justify-content: space-between; padding: 0 15px 0 9px; color: #6f6f6f; font-size: 14px; }
.dlg-title svg { width: 12px; height: 12px; fill: none; stroke: #666; }
.dlg-body { padding: 8px 8px 0 7px; }
.tabs { display: flex; align-items: flex-end; height: 28px; padding-left: 2px; }
.tab { height: 26px; background: #3a3a3a; border: 1px solid #7a7a7a; border-right: 0; display: flex; align-items: center; justify-content: center; color: #dcdcdc; white-space: nowrap; font-size: 14.2px; }
.tab.active { height: 29px; margin-bottom: -1px; background: #1a1a1a; border: 1px solid #7a7a7a; border-bottom: 0; position: relative; z-index: 1; color: #e6e6e6; padding-bottom: 2px; }
.w-doc { width: 98px; } .w-ref { width: 158px; } .w-fun { width: 73px; } .w-inf { width: 204px; } .w-var { width: 76px; } .w-ban { width: 130px; }
.panel { height: 442px; margin-top: -1px; border: 1px solid #7a7a7a; display: flex; padding: 10px 7px 0 8px; gap: 12px; }
.col-l { width: 304px; flex: none; }
.col-r { width: 620px; flex: none; }
.lbl { height: 18px; line-height: 18px; white-space: nowrap; }
.strong { font-weight: 700; font-size: 14px; }
.dim { color: #6e6e6e; }
.m14 { margin-top: 14px; }
.m15 { margin-top: 15px; }
.list { list-style: none; margin: 0; padding: 0; height: 275px; border: 1px solid #7a7a7a; }
.list li { height: 23px; line-height: 23px; padding-left: 2px; }
.sel { background: #0078d4; color: #f0f0f0; }
.input { width: 188px; height: 26px; margin-top: 6px; border: 1px solid #4a4a4a; }
.tree { height: 265px; border: 1px solid #7a7a7a; }
.row { height: 23px; display: flex; align-items: center; padding-left: 3px; position: relative; }
.chev { width: 10px; height: 10px; fill: none; }
.db { width: 16px; height: 18px; margin-left: 6px; }
.rt1 { margin-left: 5px; }
.lvl1 { padding-left: 23px; }
.tbl { width: 15px; height: 13px; margin-left: 7px; }
.lvl2 { padding-left: 67px; }
.l-last::before { content: ""; position: absolute; left: 7px; top: 1px; width: 10px; height: 10px; border-left: 1px solid #eee; border-bottom: 1px solid #eee; }
.l-mid::before { content: ""; position: absolute; left: 27px; top: 0; width: 10px; height: 23px; border-left: 1px solid #eee; }
.l-mid::after { content: ""; position: absolute; left: 27px; top: 11px; width: 10px; border-top: 1px solid #eee; }
.l-end::before { content: ""; position: absolute; left: 27px; top: 0; width: 10px; height: 12px; border-left: 1px solid #eee; border-bottom: 1px solid #eee; }
.addrow { display: flex; align-items: center; margin-top: 14px; height: 33px; }
.addlbl { width: 264px; white-space: nowrap; }
.btn { height: 33px; width: 83px; border: 1px solid #8a8a8a; border-radius: 4px; background: #333; display: flex; align-items: center; justify-content: center; color: #e6e6e6; flex: none; }
.b-proc { width: 87px; }
.b-act { width: 82px; }
.radio { display: flex; align-items: center; color: #6e6e6e; margin-left: 12px; gap: 5px; }
.r-1 { height: 18px; margin-top: 7px; }
.r-2 { height: 27px; margin-top: 7px; }
.rd { width: 12px; height: 12px; border-radius: 50%; background: #333; border: 1px solid #444; }
.rd.on { background: #111; border: 3px solid #555; }
.rdw { width: 154px; }
.c-geral { width: 169px; height: 27px; color: #6e6e6e; border-color: #7a7a7a; }
.c-geral b { width: 22px; }
.actions { display: flex; gap: 9px; padding: 18px 5px 0 6px; }
.spacer { flex: 1; }
```
